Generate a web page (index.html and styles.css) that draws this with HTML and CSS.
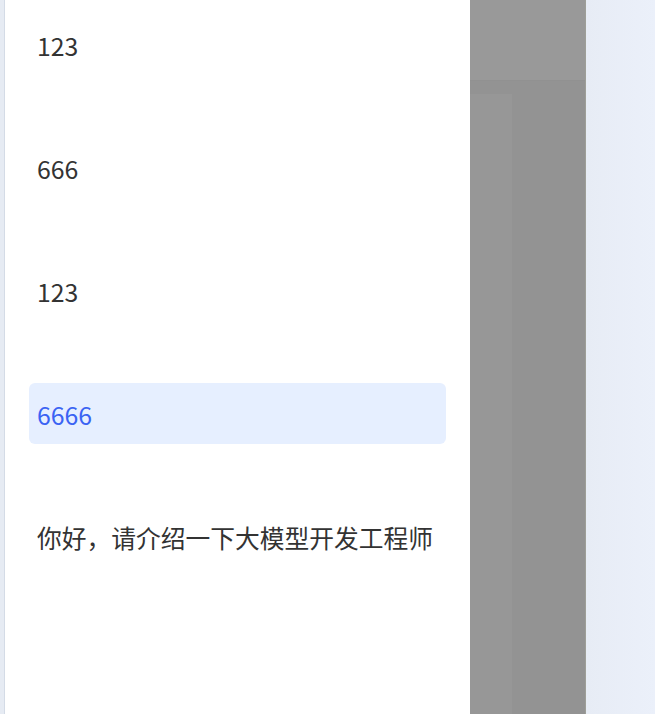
FILE: index.html
```html
<!DOCTYPE html>
<html lang="zh">
<head>
<meta charset="utf-8">
<link rel="stylesheet" href="styles.css">
</head>
<body>
<div class="app">
  <div class="edge"></div>
  <div class="panel">
    <ul class="list">
      <li class="item">123</li>
      <li class="item">666</li>
      <li class="item">123</li>
      <li class="item active">6666</li>
      <li class="item">你好，请介绍一下大模型开发工程师</li>
    </ul>
  </div>
  <div class="mask">
    <div class="mask-head"></div>
    <div class="mask-body">
      <div class="mask-card"></div>
    </div>
  </div>
  <div class="side"></div>
</div>
</body>
</html>
```

FILE: styles.css
```css
html, body {
  margin: 0;
  padding: 0;
  height: 100%;
  overflow: hidden;
}
body {
  font-family: "Noto Sans CJK SC", "Noto Sans", sans-serif;
  background: #ffffff;
}
.app {
  display: flex;
  height: 714px;
}
.edge {
  width: 4px;
  background: #e6ebf3;
  border-right: 1px solid #d4dbe6;
}
.panel {
  width: 465px;
  background: #ffffff;
  padding: 0 24px;
  box-sizing: border-box;
}
.list {
  list-style: none;
  margin: 0;
  padding: 14px 0 0;
  display: flex;
  flex-direction: column;
  gap: 62px;
}
.item {
  height: 61px;
  display: flex;
  align-items: center;
  padding: 0 8px;
  font-size: 24.75px;
  color: #333333;
  border-radius: 6px;
  white-space: nowrap;
}
.item.active {
  background: #e6efff;
  color: #3a63f3;
}
.mask {
  width: 115px;
  display: flex;
  flex-direction: column;
  background: #939393;
  border-right: 1px solid #9e9f98;
}
.mask-head {
  height: 80px;
  background: #999999;
  border-bottom: 1px solid #919191;
}
.mask-body {
  flex: 1;
  padding-top: 13px;
}
.mask-card {
  width: 42px;
  height: 100%;
  background: #979797;
}
.side {
  flex: 1;
  background: linear-gradient(to right, #e7ecf5, #ebf0fa);
}
```
